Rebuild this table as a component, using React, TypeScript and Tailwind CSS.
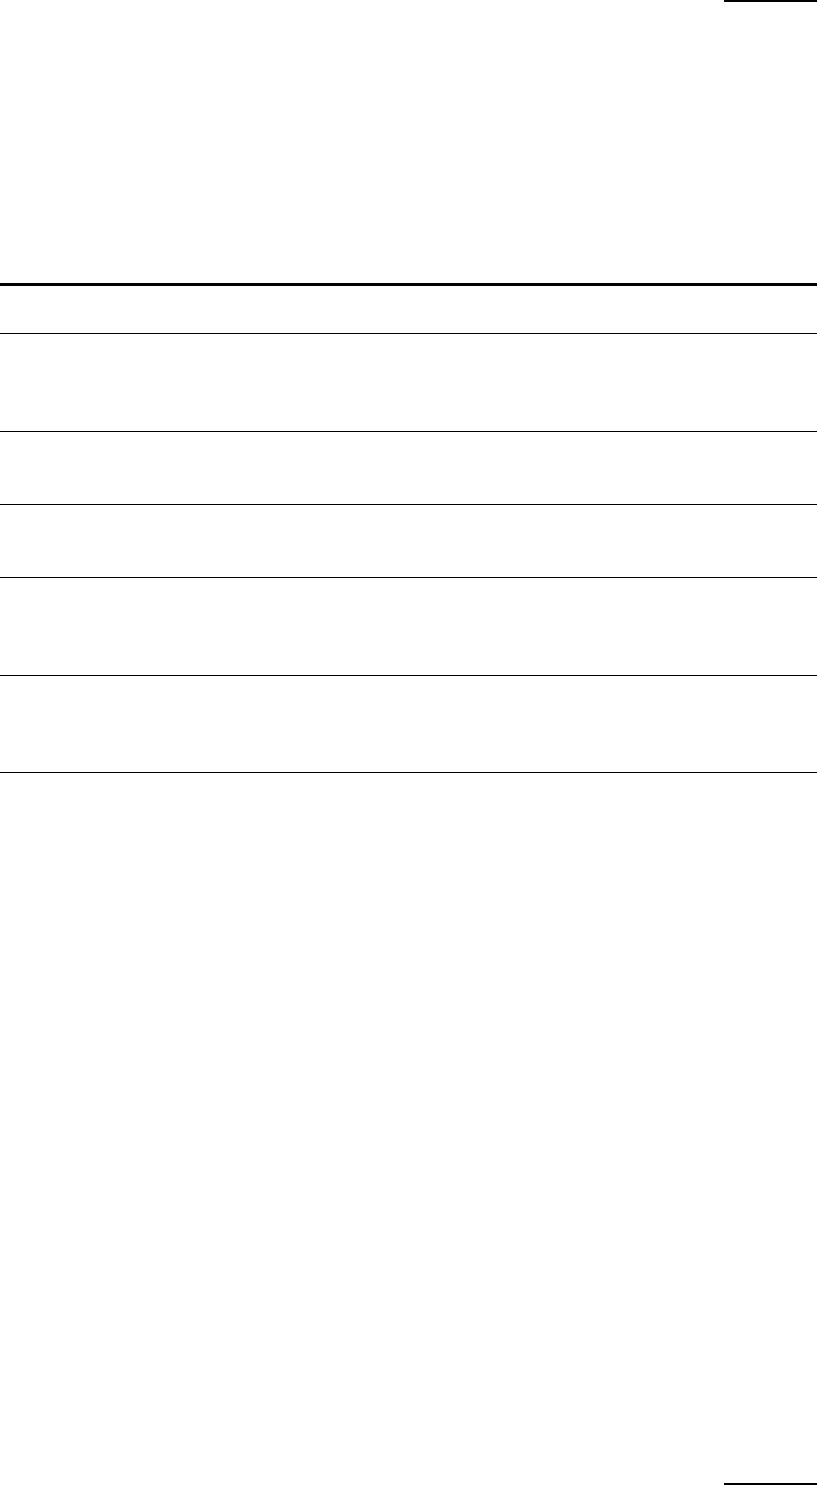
const rows = ['h-[98px]', 'h-[73px]', 'h-[73px]', 'h-[98px]', 'h-[97px]']

export default function App() {
  return (
    <div className="flex h-[1485px] flex-col bg-white font-['Liberation_Sans',sans-serif]">
      <div className="h-[2px] w-[93px] self-end bg-black" />

      <div className="mt-[281px] border-t-[3px] border-black">
        <div className="h-[48px] border-b border-black" />
        {rows.map((h, i) => (
          <div key={i} className={`${h} border-b border-black`} />
        ))}
      </div>

      <div className="mt-auto h-[2px] w-[93px] self-end bg-black" />
    </div>
  )
}
